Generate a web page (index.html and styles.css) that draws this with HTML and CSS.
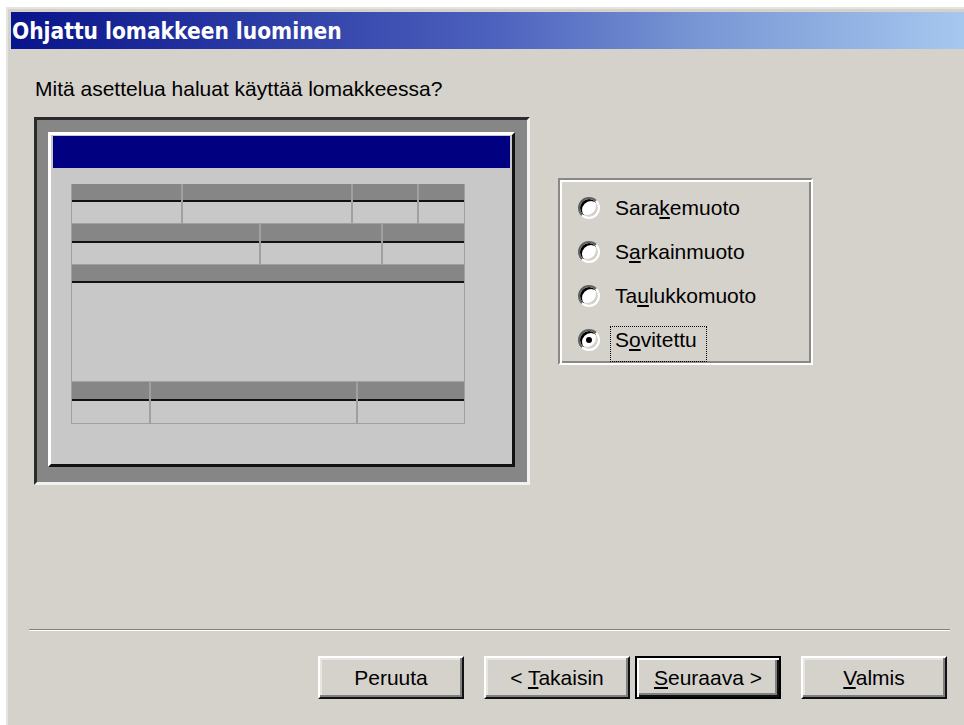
FILE: index.html
```html
<!DOCTYPE html>
<html lang="fi">
<head>
<meta charset="utf-8">
<title>Ohjattu lomakkeen luominen</title>
<link rel="stylesheet" href="styles.css">
</head>
<body>
<div class="wizard">
  <div class="caption">Ohjattu lomakkeen luominen</div>
  <div class="page">
    <p class="question">Mitä asettelua haluat käyttää lomakkeessa?</p>

    <div class="choice">
      <!-- sample of the selected layout -->
      <div class="preview">
        <div class="sheet">
          <div class="sheet-title"></div>
          <div class="grid">
            <div class="grid-row cols-a">
              <div class="cell"><i class="head"></i><i class="field"></i></div>
              <div class="cell"><i class="head"></i><i class="field"></i></div>
              <div class="cell"><i class="head"></i><i class="field"></i></div>
              <div class="cell"><i class="head"></i><i class="field"></i></div>
            </div>
            <div class="grid-row cols-b">
              <div class="cell"><i class="head"></i><i class="field"></i></div>
              <div class="cell"><i class="head"></i><i class="field"></i></div>
              <div class="cell"><i class="head"></i><i class="field"></i></div>
            </div>
            <div class="grid-row cols-c">
              <div class="cell"><i class="head"></i><i class="field"></i></div>
            </div>
            <div class="grid-row cols-d">
              <div class="cell"><i class="head"></i><i class="field"></i></div>
              <div class="cell"><i class="head"></i><i class="field"></i></div>
              <div class="cell"><i class="head"></i><i class="field"></i></div>
            </div>
          </div>
        </div>
      </div>

      <!-- layout options -->
      <div class="layouts">
        <div class="option"><span class="radio"></span><span class="option-text">Sara<u>k</u>emuoto</span></div>
        <div class="option"><span class="radio"></span><span class="option-text">S<u>a</u>rkainmuoto</span></div>
        <div class="option"><span class="radio"></span><span class="option-text">Ta<u>u</u>lukkomuoto</span></div>
        <div class="option"><span class="radio checked"></span><span class="option-text focus">S<u>o</u>vitettu</span></div>
      </div>
    </div>

    <div class="rule"></div>

    <div class="buttons">
      <button class="btn">Peruuta</button>
      <button class="btn back">&lt; <u>T</u>akaisin</button>
      <button class="btn next"><u>S</u>euraava &gt;</button>
      <button class="btn finish"><u>V</u>almis</button>
    </div>
  </div>
</div>
</body>
</html>
```

FILE: styles.css
```css
body {
  margin: 0;
  background: #fff;
  overflow: hidden;
  font-family: "Liberation Sans", Arial, sans-serif;
  font-size: 21px;
  color: #000;
}

/* dialog window */
.wizard {
  margin: 7px 0 0 6px;
  height: 740px;
  box-sizing: border-box;
  padding: 3px 0 0 3px;
  border-top: 2px solid #e6e4df;
  border-left: 2px solid #e6e4df;
  background: #d5d2cb;
}

.caption {
  height: 37px;
  box-sizing: border-box;
  padding: 2px 0 0 1px;
  line-height: 35px;
  background: linear-gradient(90deg, #08148a 0%, #4c60bd 50%, #7896d4 72%, #a6c8ef 100%);
  color: #fff;
  font-family: "DejaVu Sans Condensed", "DejaVu Sans", sans-serif;
  font-stretch: condensed;
  font-weight: bold;
  font-size: 22.5px;
  white-space: nowrap;
}

.page {
  padding: 0 14px 0 18px;
}

.question {
  margin: 28px 0 0 6px;
  line-height: 24px;
}

.choice {
  display: flex;
  align-items: flex-start;
  margin: 16px 0 0 5px;
}

/* layout preview */
.preview {
  width: 496px;
  height: 368px;
  box-sizing: border-box;
  border: 3px solid;
  border-color: #2b2b2b #f2f2f2 #f2f2f2 #2b2b2b;
  background: #868686;
  padding: 12px 0 0 11px;
}

.sheet {
  width: 467px;
  height: 335px;
  box-sizing: border-box;
  border: 3px solid;
  border-color: #fff #111 #111 #fff;
  background: #c8c8c8;
  padding: 1px 2px 0 2px;
}

.sheet-title {
  height: 32px;
  background: #000080;
}

.grid {
  width: 394px;
  margin: 16px 0 0 18px;
}

.grid-row {
  display: grid;
}

.cols-a { grid-template-columns: 111px 170px 66px 47px; }
.cols-b { grid-template-columns: 189px 122px 83px; }
.cols-c { grid-template-columns: 394px; }
.cols-d { grid-template-columns: 79px 207px 108px; }

.cell {
  display: flex;
  flex-direction: column;
  border-left: 1px solid #a0a0a0;
  border-right: 1px solid #a0a0a0;
}

.head {
  display: block;
  height: 16px;
  background: #868686;
  border-bottom: 2px solid #111;
}

.field {
  display: block;
  height: 21px;
  background: #c8c8c8;
  border-bottom: 1px solid #a0a0a0;
}

.cols-b .head,
.cols-d .head { height: 17px; }
.cols-c .field { height: 98px; }
.cols-d .field { height: 22px; }

/* option group */
.layouts {
  width: 255px;
  height: 187px;
  box-sizing: border-box;
  margin: 61px 0 0 28px;
  border: 2px solid;
  border-color: #888 #fff #fff #888;
  box-shadow: inset 2px 2px 0 #fff, inset -2px -2px 0 #888;
  padding: 6px 0 0 18px;
}

.option {
  display: flex;
  align-items: center;
  height: 44px;
}

.radio {
  position: relative;
  flex: none;
  width: 22px;
  height: 22px;
  box-sizing: border-box;
  border-radius: 50%;
  border: 2px solid;
  border-color: #606060 #fff #fff #606060;
  background: #fff;
  box-shadow: inset 2px 2px 0 #000, inset -2px -2px 0 #d5d2cb;
}

.radio.checked::after {
  content: "";
  position: absolute;
  left: 6px;
  top: 6px;
  width: 6px;
  height: 6px;
  border-radius: 50%;
  background: #000;
}

.option-text {
  margin: 8px 0 0 10px;
  padding: 1px 9px 9px 4px;
  border: 1px dotted transparent;
  line-height: 24px;
  white-space: nowrap;
}

.option-text.focus {
  border-color: #000;
}

/* footer */
.rule {
  margin-top: 144px;
  border-top: 1px solid #808080;
  border-bottom: 1px solid #fff;
}

.buttons {
  display: flex;
  justify-content: flex-end;
  margin-top: 25px;
  padding-right: 3px;
}

.btn {
  width: 146px;
  height: 43px;
  box-sizing: border-box;
  padding: 0;
  font-family: "Liberation Sans", Arial, sans-serif;
  font-size: 21px;
  line-height: 24px;
  color: #000;
  background: #d5d2cb;
  border: 2px solid;
  border-color: #fff #111 #111 #fff;
  box-shadow: inset -2px -2px 0 #808080, inset 2px 2px 0 #e8e6e1;
}

.back,
.finish {
  margin-left: 20px;
}

.next {
  margin-left: 5px;
  border-color: #000;
  box-shadow: inset 2px 2px 0 #fff, inset -2px -2px 0 #111, inset -4px -4px 0 #808080;
}
```
